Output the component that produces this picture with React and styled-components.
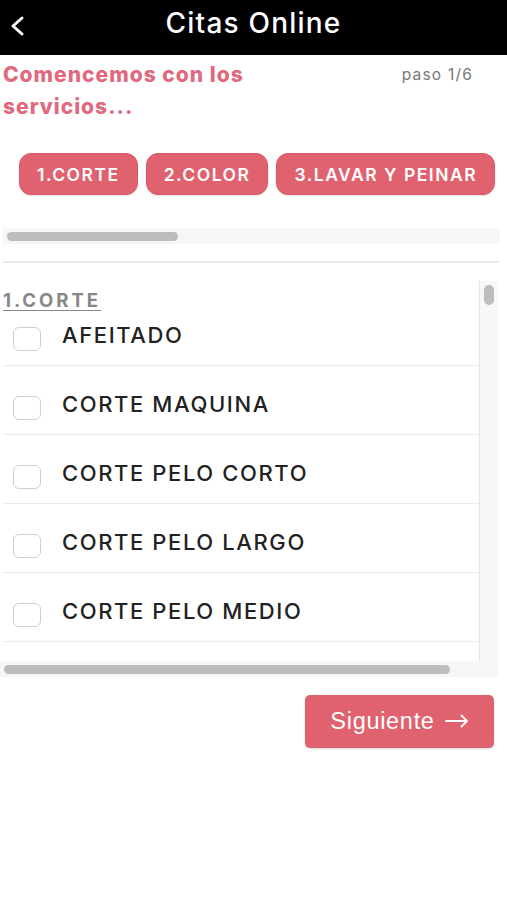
import React from 'react'
import styled, { createGlobalStyle } from 'styled-components'

const GlobalStyle = createGlobalStyle`
  html, body {
    margin: 0;
    padding: 0;
    background: #fff;
    font-family: Inter, "Liberation Sans", Arial, sans-serif;
  }
`;

const Page = styled.div`
  width: 507px;
  min-height: 900px;
  background: #fff;
`;

const Header = styled.header`
  height: 55px;
  box-sizing: border-box;
  padding-bottom: 9px;
  background: #000;
  display: flex;
  align-items: center;
  justify-content: center;
  position: relative;
  color: #fff;
  font-size: 28px;
  font-weight: 500;
  letter-spacing: 1.2px;
`;

const BackButton = styled.button`
  position: absolute;
  left: 8px;
  top: 12px;
  background: none;
  border: none;
  padding: 0;
  width: 24px;
  height: 28px;
  display: flex;
  align-items: center;
`;

const Intro = styled.div`
  display: flex;
  justify-content: space-between;
  padding: 4px 34px 0 3px;
`;

const Title = styled.h2`
  margin: 0;
  color: #e0697e;
  font-size: 21px;
  font-weight: 800;
  line-height: 32px;
  width: 290px;
  letter-spacing: 1px;
`;

const Step = styled.span`
  color: #777;
  font-size: 15.5px;
  line-height: 32px;
  letter-spacing: 1.2px;
`;

const TabsStrip = styled.div`
  margin: 30px 7px 0 3px;
  height: 91px;
  overflow: hidden;
  display: flex;
  flex-direction: column;
`;

const Tabs = styled.div`
  display: flex;
  gap: 8px;
  padding-left: 16px;
  white-space: nowrap;
`;

const Tab = styled.button`
  flex: none;
  height: 42px;
  padding: 0 17px;
  background: #e0626f;
  color: #fff;
  border: 1px solid #d9586a;
  border-radius: 12px;
  font-family: inherit;
  font-size: 17.5px;
  font-weight: 600;
  letter-spacing: 1.5px;
  box-shadow: 0 1px 2px rgba(0,0,0,0.12);
`;

const HTrack = styled.div`
  margin-top: ${p => p.$top || 0}px;
  height: ${p => p.$h || 16}px;
  background: #f6f6f6;
  display: flex;
  align-items: center;
  padding: 0 4px;
  flex: none;
`;

const HThumb = styled.div`
  height: 9px;
  border-radius: 5px;
  background: #bdbdbd;
`;

const Divider = styled.div`
  margin: 17px 8px 0 3px;
  border-top: 2px solid #e8e8e8;
`;

const ListFrame = styled.div`
  margin: 18px 9px 0 0;
  background: #f7f7f7;
  display: flex;
  flex-direction: column;
`;

const ListMain = styled.div`
  display: flex;
  height: 380px;
  background: #fff;
`;

const ListBody = styled.div`
  flex: 1;
  overflow: hidden;
  border-right: 1px solid #e6e6e6;
  padding-left: 3px;
`;

const SectionTitle = styled.div`
  color: #888;
  font-size: 18.5px;
  font-weight: 700;
  letter-spacing: 3px;
  text-decoration: underline;
  text-underline-offset: 3px;
  margin-top: 8px;
  line-height: 22px;
`;

const Row = styled.label`
  display: flex;
  align-items: center;
  gap: 21px;
  height: 69px;
  box-sizing: border-box;
  padding: 8px 0 0 10px;
  border-bottom: 1px solid #ececec;
  margin-top: ${p => (p.$first ? -14 : 0)}px;
  color: #222;
  font-size: 22px;
  font-weight: 500;
  letter-spacing: 1.6px;
`;

const Box = styled.span`
  width: 26px;
  height: 22px;
  border: 1.5px solid #cfcfcf;
  border-radius: 6px;
  background: #fff;
  flex: none;
  margin-top: 8px;
`;

const VTrack = styled.div`
  width: 18px;
  background: #f7f7f7;
  display: flex;
  justify-content: center;
  padding-top: 4px;
`;

const VThumb = styled.div`
  width: 10px;
  height: 20px;
  border-radius: 5px;
  background: #bdbdbd;
`;

const Footer = styled.div`
  display: flex;
  justify-content: flex-end;
  padding: 18px 13px 0 0;
`;

const NextButton = styled.button`
  width: 189px;
  height: 53px;
  background: #e0626f;
  color: #fff;
  border: none;
  border-radius: 5px;
  font-family: "Liberation Sans", Arial, sans-serif;
  font-size: 23.5px;
  letter-spacing: 0.7px;
  display: flex;
  align-items: center;
  justify-content: center;
  gap: 10px;
  padding-bottom: 2px;
  box-shadow: 0 1px 2px rgba(0,0,0,0.15);
`;

const services = ['AFEITADO', 'CORTE MAQUINA', 'CORTE PELO CORTO', 'CORTE PELO LARGO', 'CORTE PELO MEDIO'];

export default function App() {
  return (
    <Page>
      <GlobalStyle />
      <Header>
        <BackButton aria-label="Volver">
          <svg width="20" height="22" viewBox="0 0 20 22" fill="none">
            <path d="M14 3 L5 11 L14 19" stroke="#fff" strokeWidth="3" strokeLinecap="round" strokeLinejoin="round" />
          </svg>
        </BackButton>
        Citas Online
      </Header>

      <Intro>
        <Title>Comencemos con los servicios...</Title>
        <Step>paso 1/6</Step>
      </Intro>

      <TabsStrip>
        <Tabs>
          <Tab>1.CORTE</Tab>
          <Tab>2.COLOR</Tab>
          <Tab>3.LAVAR Y PEINAR</Tab>
          <Tab>4.</Tab>
        </Tabs>
        <HTrack $top={33} $h={17}>
          <HThumb style={{ width: '171px' }} />
        </HTrack>
      </TabsStrip>

      <Divider />

      <ListFrame>
        <ListMain>
          <ListBody>
            <SectionTitle>1.CORTE</SectionTitle>
            {services.map((s, i) => (
              <Row key={s} $first={i === 0}>
                <Box />
                <span>{s}</span>
              </Row>
            ))}
          </ListBody>
          <VTrack>
            <VThumb />
          </VTrack>
        </ListMain>
        <HTrack $h={16}>
          <HThumb style={{ width: '446px' }} />
        </HTrack>
      </ListFrame>

      <Footer>
        <NextButton>
          Siguiente
          <svg width="24" height="14" viewBox="0 0 24 14" fill="none">
            <path d="M1 7 H22 M16.5 1.5 L22 7 L16.5 12.5" stroke="#fff" strokeWidth="1.8" strokeLinecap="round" strokeLinejoin="round" />
          </svg>
        </NextButton>
      </Footer>
    </Page>
  )
}
